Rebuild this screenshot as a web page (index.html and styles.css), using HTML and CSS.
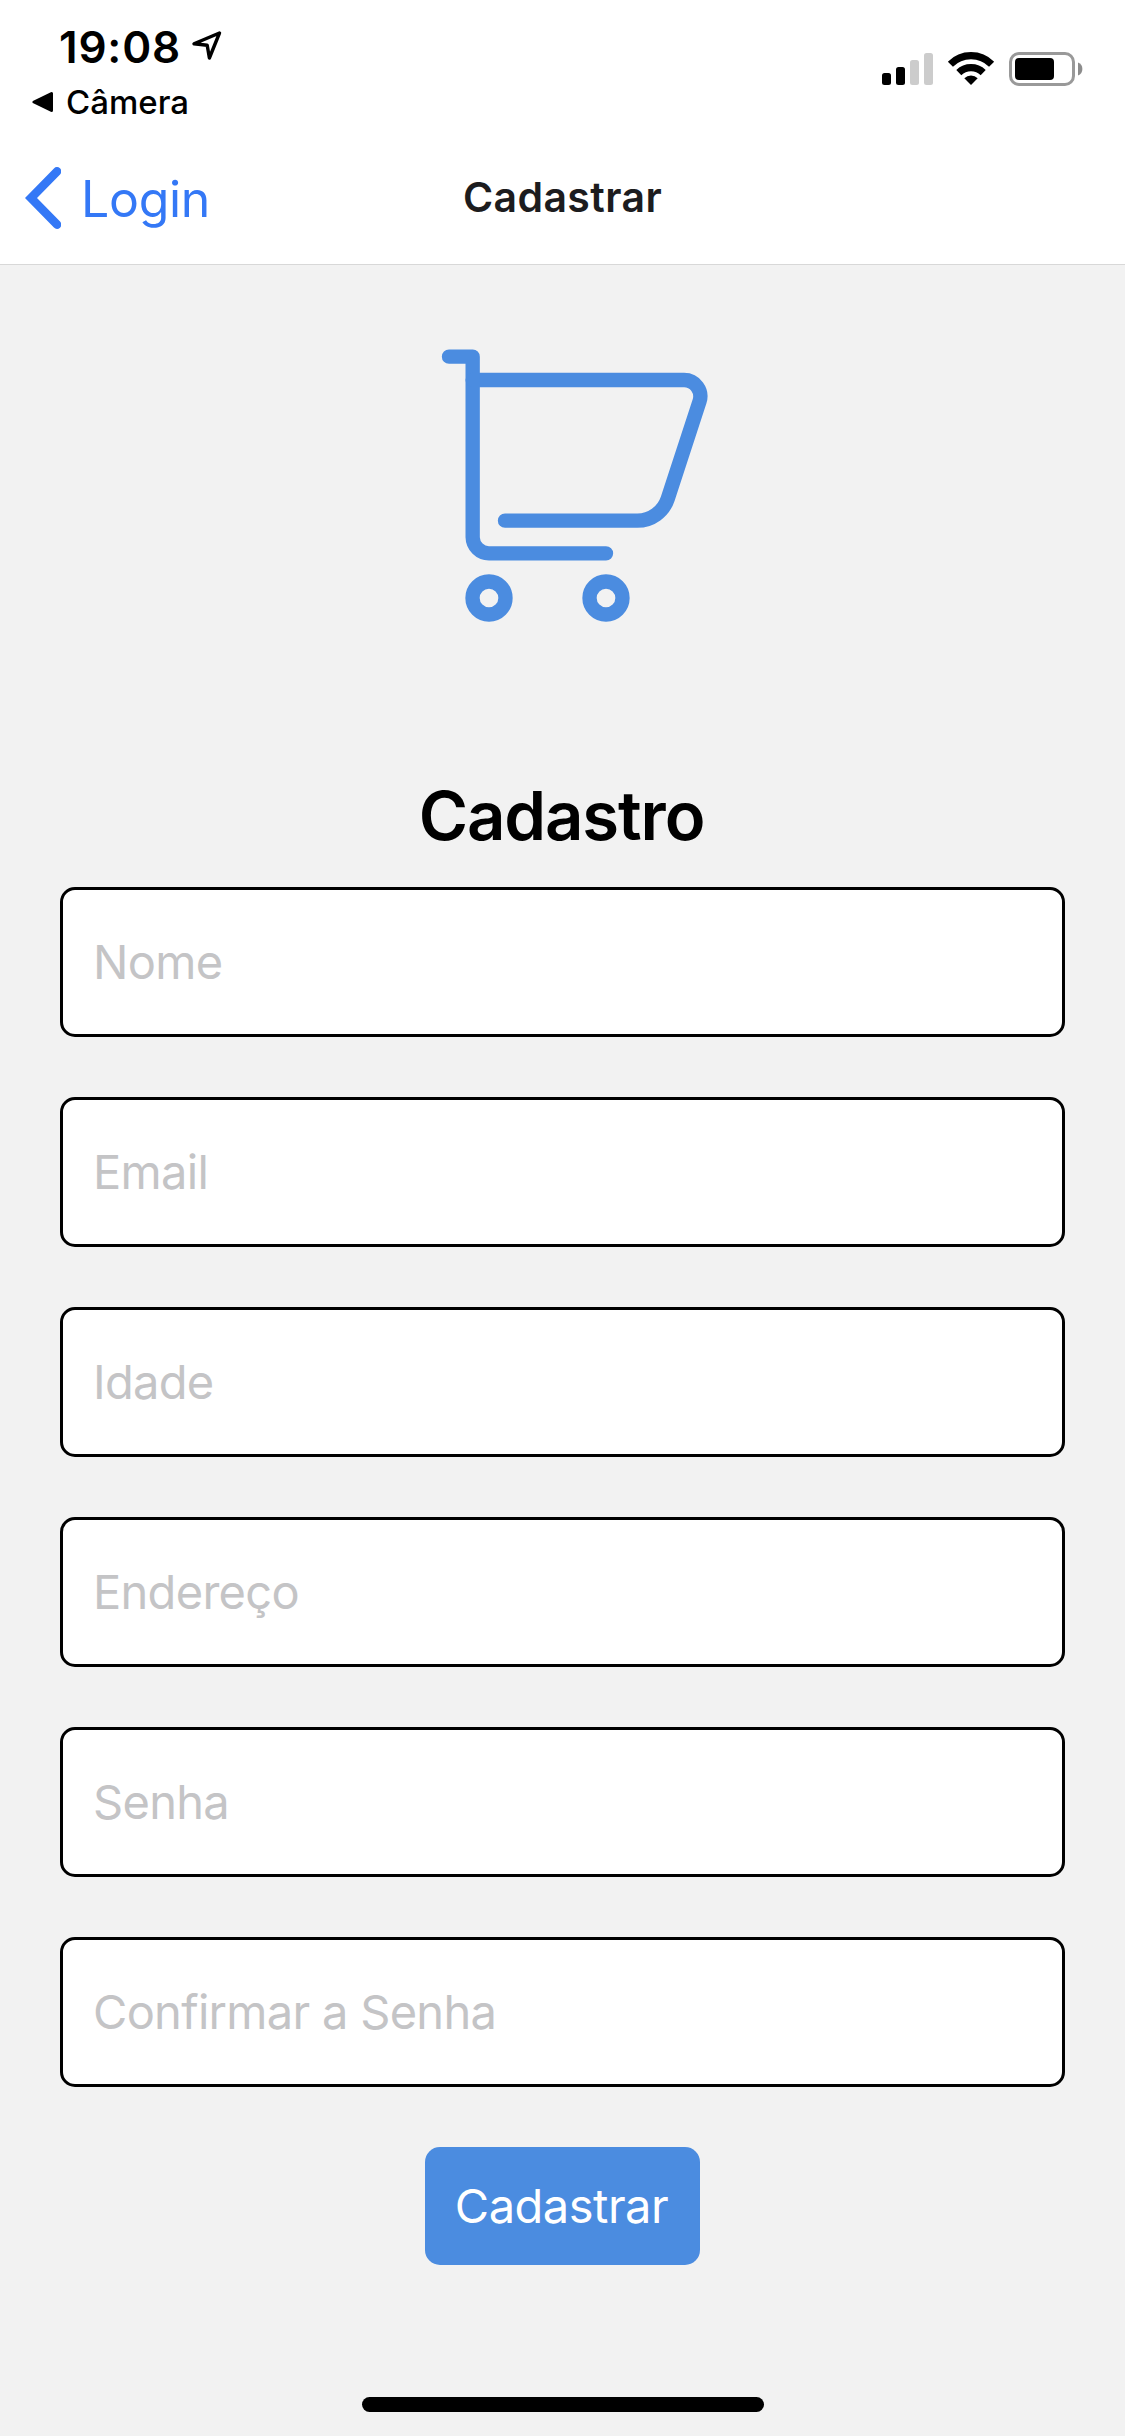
FILE: index.html
```html
<!DOCTYPE html>
<html lang="pt-BR">
<head>
<meta charset="utf-8">
<title>Cadastrar</title>
<link rel="stylesheet" href="styles.css">
</head>
<body>
<div class="screen">
  <header class="header">
    <div class="status">
      <div class="status-left">
        <div class="clock-row">
          <span class="clock">19:08</span>
          <svg class="location" width="32" height="32" viewBox="0 0 32 32"><path d="M28.500 3 L3 13.800 L16.200 15.200 L18.400 28 Z" fill="none" stroke="#000" stroke-width="3.400" stroke-linejoin="round"/></svg>
        </div>
        <div class="return-row">
          <svg width="22" height="22" viewBox="0 0 22 22"><path d="M2 11 L19.500 2.500 V19.500 Z" stroke="#000" stroke-width="3" stroke-linejoin="round"/></svg>
          <span class="return-app">Câmera</span>
        </div>
      </div>
      <svg class="status-icons" width="202" height="36" viewBox="881 51 202 36">
        <rect x="882" y="73" width="9" height="12" rx="2.500"/>
        <rect x="896" y="67" width="9" height="18" rx="2.500"/>
        <rect x="910" y="60" width="9" height="25" rx="2.500" fill="#ccc"/>
        <rect x="924" y="53" width="9" height="32" rx="2.500" fill="#ccc"/>
        <g fill="none" stroke="#000" stroke-width="7.200">
          <path d="M950.400 64.200 A29 29 0 0 1 991.600 64.200"/>
          <path d="M958.800 72.600 A17.500 17.500 0 0 1 983.200 72.600"/>
        </g>
        <path d="M971 85 L964.300 78.200 A9.800 9.800 0 0 1 977.700 78.200 Z"/>
        <rect x="1010.500" y="53.500" width="63" height="31" rx="8.500" fill="none" stroke="#999" stroke-width="3"/>
        <rect x="1015" y="58" width="39" height="22" rx="4"/>
        <path d="M1078 62.500 A7 7 0 0 1 1078 75.500 Z" fill="#8c8c8c"/>
      </svg>
    </div>
    <nav class="nav">
      <div class="back">
        <svg width="36" height="62" viewBox="0 0 36 62"><path d="M32 4.400 L6 31 L32 57.600" fill="none" stroke="#3478f6" stroke-width="8.600" stroke-linecap="round" stroke-linejoin="miter"/></svg>
        <span class="back-label">Login</span>
      </div>
      <span class="nav-title">Cadastrar</span>
      <span></span>
    </nav>
  </header>
  <main class="content">
    <svg class="cart" width="301" height="300" viewBox="-24 15 903 900" fill="none" stroke="#4b8ce0" stroke-width="43" stroke-linecap="round" stroke-linejoin="round">
      <path d="M87 80 H158 V622 A49 49 0 0 0 207 670 H558"/>
      <path d="M158 150 H792 A49 49 0 0 1 838.600 214 L743.200 506 A96 96 0 0 1 652 572 H255"/>
      <circle cx="207" cy="804" r="49.500"/>
      <circle cx="558" cy="804" r="49.500"/>
    </svg>
    <h1 class="heading">Cadastro</h1>
    <form class="form">
      <div class="field">Nome</div>
      <div class="field">Email</div>
      <div class="field">Idade</div>
      <div class="field">Endereço</div>
      <div class="field">Senha</div>
      <div class="field">Confirmar a Senha</div>
      <button class="submit" type="button">Cadastrar</button>
    </form>
  </main>
  <footer class="home"><div class="home-bar"></div></footer>
</div>
</body>
</html>
```
FILE: styles.css
```css
* { box-sizing: border-box; }
body { margin: 0; font-family: Inter, "Liberation Sans", sans-serif; }
svg { display: block; flex: none; }
.screen { width: 1125px; height: 2436px; display: flex; flex-direction: column; background: #f2f2f2; overflow: hidden; }
.header { height: 265px; background: #fff; border-bottom: 1px solid #d8d8d8; }

.status { height: 132px; display: flex; justify-content: space-between; padding: 0 42px 0 32px; }
.status-left { padding-top: 20px; }
.clock-row { display: flex; height: 54px; padding-left: 27px; gap: 10px; line-height: 54px; }
.clock { font-size: 44px; font-weight: 600; letter-spacing: 0.8px; }
.location { margin-top: 10px; }
.return-row { display: flex; align-items: center; height: 56px; gap: 12px; line-height: 56px; }
.return-app { font-size: 33px; font-weight: 500; }
.status-icons { margin-top: 51px; }

.nav { height: 132px; display: grid; grid-template-columns: 1fr auto 1fr; align-items: center; }
.back { display: flex; align-items: center; gap: 20px; padding-left: 25px; color: #3478f6; }
.back-label { font-size: 50px; line-height: 60px; padding-top: 1px; letter-spacing: -0.3px; }
.nav-title { padding-bottom: 2px; font-size: 41px; font-weight: 600; line-height: 60px; letter-spacing: 0.4px; color: #1c1c1e; }

.content { flex: 1; display: flex; flex-direction: column; align-items: center; padding: 70px 60px 0; }
.heading { margin: 131px 0 22px; padding-right: 2px; font-size: 67px; font-weight: 600; line-height: 99px; letter-spacing: -1.1px; }
.form { width: 100%; display: flex; flex-direction: column; gap: 60px; }
.field { height: 150px; display: flex; align-items: center; padding: 0 30px 2px; background: #fff; border: 3px solid #000; border-radius: 15px; color: #c4c4c6; font-size: 47px; letter-spacing: -0.7px; }
.submit { align-self: center; width: 275px; height: 118px; padding: 0 2px 2px 0; border: 0; border-radius: 15px; background: #4b8ce0; color: #fff; font-family: inherit; font-size: 47px; letter-spacing: -0.5px; }
.home { display: flex; justify-content: center; padding-bottom: 24px; }
.home-bar { width: 402px; height: 15px; border-radius: 8px; background: #000; }
```
